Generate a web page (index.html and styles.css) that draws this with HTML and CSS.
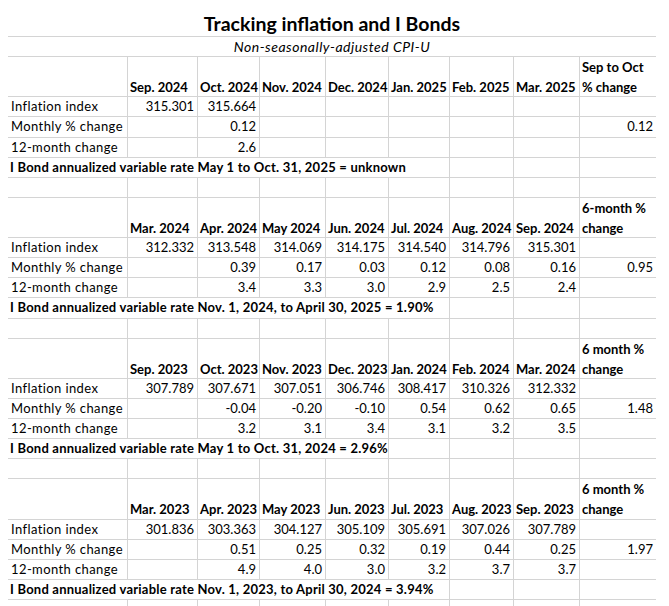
FILE: index.html
```html
<!DOCTYPE html>
<html>
<head>
<meta charset="utf-8">
<title>Tracking inflation and I Bonds</title>
<link rel="stylesheet" href="styles.css">
</head>
<body>
<div class="sheet">
  <div class="title-row"><span class="title">Tracking inflation and I Bonds</span></div>
  <div class="sub-row"><span class="subtitle">Non-seasonally-adjusted CPI-U</span></div>

  <div class="row head">
    <div class="c"></div><div class="c">Sep. 2024</div><div class="c">Oct. 2024</div><div class="c">Nov. 2024</div><div class="c">Dec. 2024</div><div class="c">Jan. 2025</div><div class="c">Feb. 2025</div><div class="c">Mar. 2025</div><div class="c">Sep to Oct<br>% change</div>
  </div>
  <div class="row"><div class="c lab">Inflation index</div><div class="c n">315.301</div><div class="c n">315.664</div><div class="c n"></div><div class="c n"></div><div class="c n"></div><div class="c n"></div><div class="c n"></div><div class="c n"></div></div>
  <div class="row"><div class="c lab">Monthly % change</div><div class="c n"></div><div class="c n">0.12</div><div class="c n"></div><div class="c n"></div><div class="c n"></div><div class="c n"></div><div class="c n"></div><div class="c n">0.12</div></div>
  <div class="row"><div class="c lab">12-month change</div><div class="c n"></div><div class="c n">2.6</div><div class="c n"></div><div class="c n"></div><div class="c n"></div><div class="c n"></div><div class="c n"></div><div class="c n"></div></div>
  <div class="row"><div class="c bond span6">I Bond annualized variable rate May 1 to Oct. 31, 2025 = unknown</div><div class="c"></div><div class="c"></div><div class="c"></div></div>
  <div class="row"><div class="c"></div><div class="c"></div><div class="c"></div><div class="c"></div><div class="c"></div><div class="c"></div><div class="c"></div><div class="c"></div><div class="c"></div></div>

  <div class="row head">
    <div class="c"></div><div class="c">Mar. 2024</div><div class="c">Apr. 2024</div><div class="c">May 2024</div><div class="c">Jun. 2024</div><div class="c">Jul. 2024</div><div class="c">Aug. 2024</div><div class="c">Sep. 2024</div><div class="c">6-month %<br>change</div>
  </div>
  <div class="row"><div class="c lab">Inflation index</div><div class="c n">312.332</div><div class="c n">313.548</div><div class="c n">314.069</div><div class="c n">314.175</div><div class="c n">314.540</div><div class="c n">314.796</div><div class="c n">315.301</div><div class="c n"></div></div>
  <div class="row"><div class="c lab">Monthly % change</div><div class="c n"></div><div class="c n">0.39</div><div class="c n">0.17</div><div class="c n">0.03</div><div class="c n">0.12</div><div class="c n">0.08</div><div class="c n">0.16</div><div class="c n">0.95</div></div>
  <div class="row"><div class="c lab">12-month change</div><div class="c n"></div><div class="c n">3.4</div><div class="c n">3.3</div><div class="c n">3.0</div><div class="c n">2.9</div><div class="c n">2.5</div><div class="c n">2.4</div><div class="c n"></div></div>
  <div class="row"><div class="c bond span6">I Bond annualized variable rate Nov. 1, 2024, to April 30, 2025 = 1.90%</div><div class="c"></div><div class="c"></div><div class="c"></div></div>
  <div class="row"><div class="c"></div><div class="c"></div><div class="c"></div><div class="c"></div><div class="c"></div><div class="c"></div><div class="c"></div><div class="c"></div><div class="c"></div></div>

  <div class="row head">
    <div class="c"></div><div class="c">Sep. 2023</div><div class="c">Oct. 2023</div><div class="c">Nov. 2023</div><div class="c">Dec. 2023</div><div class="c">Jan. 2024</div><div class="c">Feb. 2024</div><div class="c">Mar. 2024</div><div class="c">6 month %<br>change</div>
  </div>
  <div class="row"><div class="c lab">Inflation index</div><div class="c n">307.789</div><div class="c n">307.671</div><div class="c n">307.051</div><div class="c n">306.746</div><div class="c n">308.417</div><div class="c n">310.326</div><div class="c n">312.332</div><div class="c n"></div></div>
  <div class="row"><div class="c lab">Monthly % change</div><div class="c n"></div><div class="c n">-0.04</div><div class="c n">-0.20</div><div class="c n">-0.10</div><div class="c n">0.54</div><div class="c n">0.62</div><div class="c n">0.65</div><div class="c n">1.48</div></div>
  <div class="row"><div class="c lab">12-month change</div><div class="c n"></div><div class="c n">3.2</div><div class="c n">3.1</div><div class="c n">3.4</div><div class="c n">3.1</div><div class="c n">3.2</div><div class="c n">3.5</div><div class="c n"></div></div>
  <div class="row"><div class="c bond span5">I Bond annualized variable rate May 1 to Oct. 31, 2024 = 2.96%</div><div class="c"></div><div class="c"></div><div class="c"></div><div class="c"></div></div>
  <div class="row"><div class="c"></div><div class="c"></div><div class="c"></div><div class="c"></div><div class="c"></div><div class="c"></div><div class="c"></div><div class="c"></div><div class="c"></div></div>

  <div class="row head">
    <div class="c"></div><div class="c">Mar. 2023</div><div class="c">Apr. 2023</div><div class="c">May 2023</div><div class="c">Jun. 2023</div><div class="c">Jul. 2023</div><div class="c">Aug. 2023</div><div class="c">Sep. 2023</div><div class="c">6 month %<br>change</div>
  </div>
  <div class="row"><div class="c lab">Inflation index</div><div class="c n">301.836</div><div class="c n">303.363</div><div class="c n">304.127</div><div class="c n">305.109</div><div class="c n">305.691</div><div class="c n">307.026</div><div class="c n">307.789</div><div class="c n"></div></div>
  <div class="row"><div class="c lab">Monthly % change</div><div class="c n"></div><div class="c n">0.51</div><div class="c n">0.25</div><div class="c n">0.32</div><div class="c n">0.19</div><div class="c n">0.44</div><div class="c n">0.25</div><div class="c n">1.97</div></div>
  <div class="row"><div class="c lab">12-month change</div><div class="c n"></div><div class="c n">4.9</div><div class="c n">4.0</div><div class="c n">3.0</div><div class="c n">3.2</div><div class="c n">3.7</div><div class="c n">3.7</div><div class="c n"></div></div>
  <div class="row"><div class="c bond span6">I Bond annualized variable rate Nov. 1, 2023, to April 30, 2024 = 3.94%</div><div class="c"></div><div class="c"></div><div class="c"></div></div>
  <div class="row"><div class="c"></div><div class="c"></div><div class="c"></div><div class="c"></div><div class="c"></div><div class="c"></div><div class="c"></div><div class="c"></div><div class="c"></div></div>
</div>
</body>
</html>
```

FILE: styles.css
```css
* { box-sizing: border-box; }
html, body { margin: 0; padding: 0; overflow: hidden; background: #fff; }
body {
  font-family: Lato, "Liberation Sans", sans-serif;
  font-size: 13px;
  color: #000;
}
.sheet {
  width: 648px;
  margin-left: 8px;
}
.title-row {
  height: 36px;
  display: flex;
  align-items: flex-end;
  justify-content: center;
  padding-bottom: 0.5px;
}
.title {
  font-weight: 700;
  font-size: 19.5px;
  line-height: 24px;
}
.sub-row {
  height: 20.12px;
  border-top: 1px solid #d4d4d4;
  text-align: center;
  line-height: 19.12px;
  font-style: italic;
  font-size: 14px;
  letter-spacing: 0.5px;
}
.row {
  display: grid;
  grid-template-columns: 120px 70px 62px 66px 63px 61px 64px 66px 76px;
  height: 20.12px;
  border-top: 1px solid #d4d4d4;
  line-height: 19.12px;
}
.row.head {
  height: 40.24px;
  font-weight: 700;
  line-height: 20px;
}
.c {
  border-right: 1px solid #d4d4d4;
  white-space: nowrap;
  padding: 0 2px;
}
.c:last-child { border-right: none; }
.head .c {
  display: flex;
  align-items: flex-end;
  padding-left: 2px;
}
.lab { padding-left: 3px; letter-spacing: 0.4px; }
.n { text-align: right; padding-right: 3px; }
.bond {
  font-weight: 700;
  padding-left: 2px;
  letter-spacing: 0.22px;
}
.span6 { grid-column: span 6; }
.span5 { grid-column: span 5; }
```
